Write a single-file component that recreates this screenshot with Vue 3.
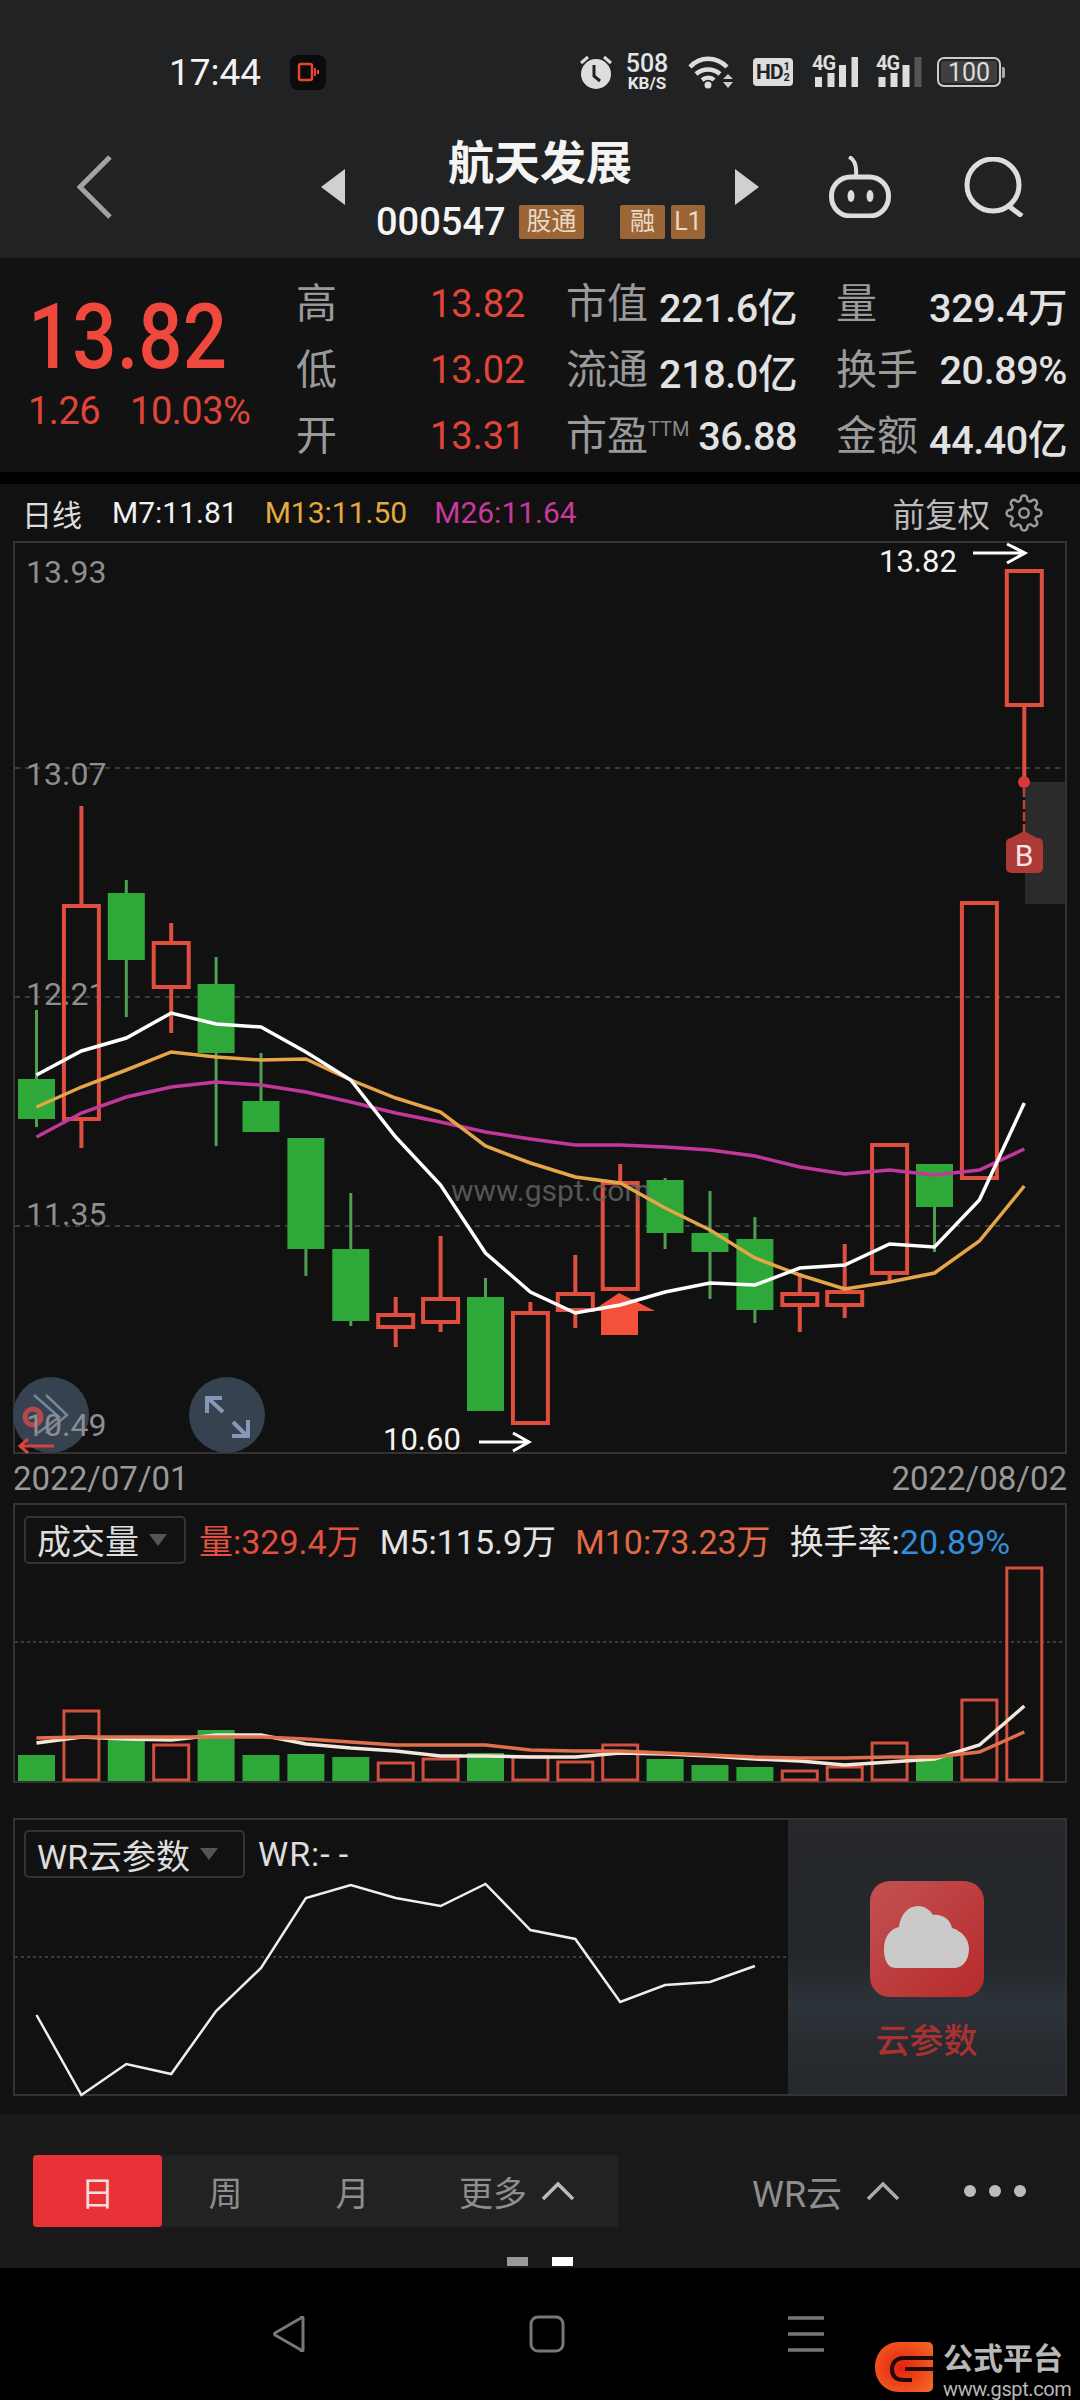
<template>
  <div class="phone">
    <header class="top">
      <div class="status">
        <span class="clock">17:44</span>
        <span class="rec">
          <svg width="22" height="20" viewBox="0 0 22 20"><rect x="2" y="2" width="13" height="16" rx="2" fill="none" stroke="#e8452f" stroke-width="2.5"/><path d="M18 6v8M21 8v4" stroke="#e8452f" stroke-width="2"/></svg>
        </span>
        <div class="status-right">
          <svg width="32" height="34" viewBox="0 0 32 34"><circle cx="16" cy="19" r="15" fill="#ddd"/><path d="M14 10v11l6 5" fill="none" stroke="#222" stroke-width="3"/><path d="M1 8l7-6M31 8l-7-6" stroke="#ddd" stroke-width="3"/></svg>
          <div class="speed"><b>508</b><i>KB/S</i></div>
          <svg class="wifi" width="45" height="34" viewBox="0 0 45 34"><path d="M2 12C12 1 28 1 39 12M8 19c7-6 17-6 24 0M14 25c4-3 9-3 12 0" fill="none" stroke="#ddd" stroke-width="4.500"/><circle cx="20" cy="30" r="3.500" fill="#ddd"/><path d="M35 24l5-5 5 5zM35 27l5 6 5-6z" fill="#ccc"/></svg>
          <div class="hd"><b>HD</b><i>1<br>2</i></div>
          <div class="signal sig-a"><em>4G</em><svg width="46" height="30" viewBox="0 0 46 30"><path d="M6.500 20v10M19 15v15M30.500 8v22M43 0v30" stroke="#ddd" stroke-width="7"/></svg></div>
          <div class="signal sig-b"><em>4G</em><svg width="46" height="30" viewBox="0 0 46 30"><path d="M6 20v10M18 15v15M30 8v22" stroke="#ddd" stroke-width="7"/><path d="M42 0v30" stroke="#555" stroke-width="7"/></svg></div>
          <div class="battery"><span>100</span></div>
        </div>
      </div>
      <nav class="nav">
        <svg class="back" width="36" height="64" viewBox="0 0 36 64"><path d="M33 2L3 32l30 30" fill="none" stroke="#a3a3a3" stroke-width="5"/></svg>
        <svg class="tri-left" width="24" height="36" viewBox="0 0 24 36"><path d="M24 0v36L0 18z" fill="#d0d0d0"/></svg>
        <div class="title">
          <div class="name">航天发展</div>
          <div class="code">
            <span class="num">000547</span>
            <span class="tag tag-a">股通</span>
            <span class="tag tag-b">融</span>
            <span class="tag tag-c">L1</span>
          </div>
        </div>
        <svg width="24" height="36" viewBox="0 0 24 36"><path d="M0 0v36l24-18z" fill="#d0d0d0"/></svg>
        <svg class="robot" width="62" height="62" viewBox="0 0 62 62"><path d="M20 1c5 2 8 7 7 19" fill="none" stroke="#ddd" stroke-width="4"/><rect x="2.500" y="21" width="57" height="39" rx="19" fill="none" stroke="#ddd" stroke-width="5"/><ellipse cx="22" cy="40" rx="3.500" ry="6" fill="#ddd"/><ellipse cx="41" cy="40" rx="3.500" ry="6" fill="#ddd"/></svg>
        <svg class="search" width="60" height="60" viewBox="0 0 60 60"><circle cx="29" cy="28" r="26" fill="none" stroke="#ddd" stroke-width="5"/><path d="M46 50l12 9" stroke="#ddd" stroke-width="5"/></svg>
      </nav>
    </header>

    <section class="quote">
      <div class="price">
        <div class="last">13.82</div>
        <div class="chg"><span>1.26</span><span>10.03%</span></div>
      </div>
      <div class="stats">
        <template v-for="r in statRows" :key="r.l1">
          <span class="lab">{{ r.l1 }}</span>
          <span class="red-val">{{ r.v1 }}</span>
          <span class="pair"><span class="lab">{{ r.l2 }}<sup v-if="r.ttm">TTM</sup></span><span class="val">{{ r.v2 }}</span></span>
          <span class="pair"><span class="lab">{{ r.l3 }}</span><span class="val">{{ r.v3 }}</span></span>
        </template>
      </div>
    </section>

    <main class="charts">
      <div class="legend">
        <span class="lg-name">日线</span>
        <span class="lg-white">M7:11.81</span>
        <span class="lg-orange">M13:11.50</span>
        <span class="lg-pink">M26:11.64</span>
        <span class="lg-right">前复权
          <svg width="38" height="38" viewBox="0 0 24 24"><circle cx="12" cy="12" r="3" fill="none" stroke="#999" stroke-width="1.600"/><path fill="none" stroke="#999" stroke-width="1.600" d="M19.4 15a1.65 1.65 0 0 0 .33 1.82l.06.06a2 2 0 0 1 0 2.83 2 2 0 0 1-2.83 0l-.06-.06a1.65 1.65 0 0 0-1.82-.33 1.65 1.65 0 0 0-1 1.51V21a2 2 0 0 1-2 2 2 2 0 0 1-2-2v-.09A1.65 1.65 0 0 0 9 19.4a1.65 1.65 0 0 0-1.82.33l-.06.06a2 2 0 0 1-2.83 0 2 2 0 0 1 0-2.83l.06-.06a1.65 1.65 0 0 0 .33-1.82 1.65 1.65 0 0 0-1.51-1H3a2 2 0 0 1-2-2 2 2 0 0 1 2-2h.09A1.65 1.65 0 0 0 4.6 9a1.65 1.65 0 0 0-.33-1.82l-.06-.06a2 2 0 0 1 0-2.83 2 2 0 0 1 2.83 0l.06.06a1.65 1.65 0 0 0 1.82.33H9a1.65 1.65 0 0 0 1-1.51V3a2 2 0 0 1 2-2 2 2 0 0 1 2 2v.09a1.65 1.65 0 0 0 1 1.51 1.65 1.65 0 0 0 1.82-.33l.06-.06a2 2 0 0 1 2.83 0 2 2 0 0 1 0 2.83l-.06.06a1.65 1.65 0 0 0-.33 1.82V9a1.65 1.65 0 0 0 1.51 1H21a2 2 0 0 1 2 2 2 2 0 0 1-2 2h-.09a1.65 1.65 0 0 0-1.51 1z"/></svg>
        </span>
      </div>

      <div class="panel main-panel">
        <svg class="canvas" width="1050" height="909" viewBox="15 543 1050 909">
          <path v-for="y in [768, 997, 1226]" :key="y" :d="`M15 ${y}H1065`" class="grid"/>
          <rect x="1025" y="782" width="40" height="122" fill="#2b2b2b"/>
          <circle cx="51" cy="1415" r="38" class="fab"/>
          <circle cx="227" cy="1415" r="38" class="fab"/>
          <circle cx="33" cy="1417" r="8" fill="none" stroke="#b8474c" stroke-width="5"/>
          <path d="M34 1395l25 22-21 16M46 1395l21 20-21 18" fill="none" stroke="#76869a" stroke-width="2.500"/>
          <path d="M209 1399l14 13M233 1422l13 13M207 1413V1398H222M248 1420V1436H232" fill="none" stroke="#8997b6" stroke-width="4"/>
          <text v-for="a in axis" :key="a.t" x="26" :y="a.y" class="axis">{{ a.t }}</text>
          <g v-for="c in candleShapes" :key="c.x">
            <path :d="wickPath(c)" :class="c.up ? 'wick-up' : 'wick-down'"/>
            <rect v-if="c.up" :x="c.x - 17.500" :y="c.bt" width="35" :height="c.bb - c.bt" class="body-up"/>
            <rect v-else :x="c.x - 18.500" :y="c.bt" width="37" :height="c.bb - c.bt" class="body-down"/>
          </g>
          <text x="451" y="1201" class="mark">www.gspt.com</text>
          <path d="M592 1311L619 1293L655 1311H638V1335H601V1311z" fill="#f4503a"/>
          <polyline :points="magentaPts" class="ln" stroke="#c2389a"/>
          <polyline :points="orangePts" class="ln" stroke="#e5a549"/>
          <polyline :points="whitePts" class="ln" stroke="#fff"/>
          <circle cx="1024" cy="782" r="6" fill="#d8393a"/>
          <path d="M1024 788V832" stroke="#b9443f" stroke-width="2.500" stroke-dasharray="9 3"/>
          <path d="M1011 838L1024 831L1037 838a5 5 0 0 1 6 5V868a5 5 0 0 1-5 5H1011a5 5 0 0 1-5-5V843a5 5 0 0 1 5-5z" fill="#ad3a37"/>
          <text x="1024" y="866" class="badge">B</text>
          <text x="879" y="572" class="hi">13.82</text>
          <path d="M973 553H1024M1007 544L1025 553L1007 563" class="arrow"/>
          <text x="383" y="1450" class="hi">10.60</text>
          <path d="M479 1442H528M513 1433L529 1442L513 1451" class="arrow"/>
          <path d="M22 1446H54M28 1439L20 1446L28 1453" fill="none" stroke="#d9423d" stroke-width="3"/>
        </svg>
      </div>

      <div class="dates"><span>2022/07/01</span><span>2022/08/02</span></div>

      <div class="panel vol-panel">
        <svg class="canvas" width="1050" height="276" viewBox="15 1505 1050 276">
          <path d="M15 1642H1065" class="dots"/>
          <g v-for="b in volBars" :key="b.x">
            <rect v-if="b.up" :x="b.x - 17.500" :y="b.top" width="35" :height="1780 - b.top" class="vol-up"/>
            <rect v-else :x="b.x - 18.500" :y="b.top" width="37" :height="1781 - b.top" fill="#2fa83a"/>
          </g>
          <polyline :points="volWhitePts" class="ln" stroke="#f3e6dc"/>
          <polyline :points="volOrangePts" class="ln" stroke="#e0704c"/>
        </svg>
        <div class="ind-head">
          <span class="picker vol-picker">成交量<i class="caret"></i></span>
          <span class="ind-vals">
            <span class="c-red">量:329.4万</span>
            <span>M5:115.9万</span>
            <span class="c-orange">M10:73.23万</span>
            <span>换手率:<span class="c-blue">20.89%</span></span>
          </span>
        </div>
      </div>

      <div class="panel wr-panel">
        <svg class="canvas" width="773" height="274" viewBox="15 1820 773 274">
          <path d="M15 1957H788" class="dots"/>
          <polyline :points="wrPts" class="ln ln-thin" stroke="#eee"/>
        </svg>
        <div class="ind-head">
          <span class="picker wr-picker">WR云参数<i class="caret"></i></span>
          <span class="wr-val">WR:<span class="dash">--</span></span>
        </div>
        <aside class="cloud">
          <div class="cloud-tile">
            <svg width="114" height="116" viewBox="0 0 114 116"><path d="M26 87C16 87 14 76 14 68C14 56 20 48 29 46C30 34 38 25 48 25C55 25 60 29 63 34C72 33 80 38 82 47C92 50 99 58 99 68C99 80 92 87 84 87Z" fill="#cbc9c9"/></svg>
          </div>
          <div class="cloud-text">云参数</div>
        </aside>
      </div>
    </main>

    <section class="toolbar">
      <div class="tool-row">
        <div class="periods">
          <span class="p p-on">日</span>
          <span class="p">周</span>
          <span class="p">月</span>
          <span class="p p-more">更多<svg width="34" height="20" viewBox="0 0 34 20"><path d="M2 18L17 3l15 15" fill="none" stroke="#bbb" stroke-width="3.500"/></svg></span>
        </div>
        <span class="wr-btn">WR云<svg width="34" height="20" viewBox="0 0 34 20"><path d="M2 18L17 3l15 15" fill="none" stroke="#aaa" stroke-width="3.500"/></svg></span>
        <span class="more"><i></i><i></i><i></i></span>
      </div>
      <div class="pager"><i></i><i class="on"></i></div>
    </section>

    <footer class="sysnav">
      <svg width="34" height="36" viewBox="0 0 34 36"><path d="M31 2v32a1 1 0 0 1-2 0L3 19a1.500 1.500 0 0 1 0-2L29 2a1 1 0 0 1 2 0z" fill="none" stroke="#777" stroke-width="3" stroke-linejoin="round"/></svg>
      <svg class="home" width="36" height="38" viewBox="0 0 36 38"><rect x="2" y="2" width="32" height="34" rx="7" fill="none" stroke="#777" stroke-width="3"/></svg>
      <svg class="menu" width="36" height="36" viewBox="0 0 36 36"><path d="M0 2H36M0 18H36M0 34H36" stroke="#777" stroke-width="3.500"/></svg>
      <div class="brand">
        <svg width="60" height="50" viewBox="0 0 60 50"><defs><radialGradient id="gsp" cx=".45" cy=".5" r=".7"><stop offset="0" stop-color="#e8200f"/><stop offset="1" stop-color="#f26a26"/></radialGradient></defs><path d="M24 0H53a5 5 0 0 1 5 5V45a5 5 0 0 1-5 5H24C10 50 0 39 0 25S10 0 24 0z" fill="url(#gsp)"/><path d="M58 16H29C20 16 17 22 17 27C17 34 21 38 29 38H37M30 27H58" fill="none" stroke="#1c0b08" stroke-width="4"/></svg>
        <div class="brand-text"><b>公式平台</b><span>www.gspt.com</span></div>
      </div>
    </footer>
  </div>
</template>

<script setup>
const xAt = (i) => +(36.5 + 44.9 * i).toFixed(1)
const toPts = (ys) => ys.map((y, i) => `${xAt(i)},${y}`).join(' ')

const statRows = [
  { l1: '高', v1: '13.82', l2: '市值', v2: '221.6亿', l3: '量', v3: '329.4万' },
  { l1: '低', v1: '13.02', l2: '流通', v2: '218.0亿', l3: '换手', v3: '20.89%' },
  { l1: '开', v1: '13.31', l2: '市盈', ttm: true, v2: '36.88', l3: '金额', v3: '44.40亿' },
]

const axis = [
  { t: '13.93', y: 583 },
  { t: '13.07', y: 785 },
  { t: '12.21', y: 1005 },
  { t: '11.35', y: 1225 },
  { t: '10.49', y: 1436 },
]

// wick top, body top, body bottom, wick bottom, up
const candles = [
  [1010, 1079, 1119, 1127, 0], [806, 906, 1119, 1148, 1], [880, 893, 960, 1017, 0],
  [923, 943, 987, 1033, 1], [957, 984, 1053, 1146, 0], [1053, 1101, 1132, 1132, 0],
  [1138, 1138, 1249, 1276, 0], [1193, 1249, 1321, 1326, 0], [1297, 1315, 1327, 1347, 1],
  [1236, 1299, 1322, 1332, 1], [1278, 1297, 1411, 1411, 0], [1302, 1313, 1423, 1423, 1],
  [1255, 1294, 1310, 1328, 1], [1164, 1183, 1289, 1289, 1], [1178, 1180, 1233, 1249, 0],
  [1191, 1233, 1252, 1299, 0], [1217, 1239, 1310, 1323, 0], [1273, 1294, 1305, 1332, 1],
  [1244, 1292, 1305, 1318, 1], [1143, 1145, 1273, 1283, 1], [1164, 1164, 1207, 1252, 0],
  [903, 903, 1178, 1178, 1], [571, 571, 705, 782, 1],
]
const candleShapes = candles.map((c, i) => ({ x: xAt(i), top: c[0], bt: c[1], bb: c[2], bot: c[3], up: c[4] }))
// hollow bodies are see-through, so the wick stops at the body
const wickPath = (c) => `M${c.x} ${c.top}V${c.bt}M${c.x} ${c.bb}V${c.bot}`

const whitePts = toPts([1075, 1051, 1038, 1013, 1024, 1027, 1052, 1080, 1137, 1185, 1253, 1292, 1313, 1305, 1292, 1283, 1285, 1268, 1265, 1244, 1247, 1200, 1103])
const orangePts = toPts([1107, 1087, 1070, 1052, 1057, 1060, 1059, 1080, 1098, 1112, 1146, 1163, 1177, 1183, 1208, 1230, 1258, 1275, 1289, 1282, 1273, 1241, 1186])
const magentaPts = toPts([1137, 1113, 1097, 1087, 1082, 1085, 1092, 1102, 1113, 1122, 1132, 1139, 1145, 1145, 1147, 1150, 1156, 1167, 1174, 1170, 1175, 1170, 1149])

const volTops = [1755, 1711, 1740, 1745, 1730, 1755, 1754, 1757, 1763, 1759, 1753, 1757, 1762, 1745, 1759, 1765, 1767, 1771, 1767, 1743, 1755, 1700, 1568]
const volBars = volTops.map((top, i) => ({ x: xAt(i), top, up: candles[i][4] }))

const volY = (v) => Math.round(1500 + v / 2.613)
const volWhitePts = toPts([635, 620, 625, 628, 615, 615, 637, 648, 655, 670, 668, 672, 672, 660, 665, 670, 678, 682, 692, 685, 678, 640, 538].map(volY))
const volOrangePts = toPts([622, 618, 618, 618, 618, 620, 625, 633, 641, 641, 641, 652, 657, 657, 662, 667, 672, 675, 675, 672, 672, 658, 607].map(volY))
const wrPts = toPts([2015, 2095, 2064, 2074, 2011, 1968, 1898, 1885, 1898, 1906, 1884, 1930, 1939, 2002, 1985, 1982, 1966])
</script>

<style>
html, body { background: #000; }
</style>

<style scoped>
.phone { width: 1080px; height: 2400px; overflow: hidden; background: #111; color: #ddd; font-family: Roboto, "Noto Sans CJK SC", sans-serif; display: flex; flex-direction: column; }
.top { height: 258px; flex: none; background: #202224; box-sizing: border-box; padding-top: 40px; }
.status { height: 64px; display: flex; align-items: center; padding: 0 79px 0 169px; }
.clock { font-size: 37px; color: #f2f2f2; }
.rec { width: 36px; height: 35px; margin-left: 29px; background: #0b0b0b; border-radius: 8px; display: flex; align-items: center; justify-content: center; }
.status-right { margin-left: auto; display: flex; align-items: center; }
.speed { width: 44px; margin-left: 13px; display: flex; flex-direction: column; align-items: center; line-height: 1; color: #e4e4e4; }
.speed b { font-size: 25px; line-height: 20px; font-weight: 500; }
.speed i { font-size: 17px; line-height: 15px; font-style: normal; font-weight: 700; margin-top: 2px; }
.wifi { margin-left: 19px; }
.hd { width: 40px; height: 28px; margin-left: 20px; background: #ddd; border-radius: 4px; color: #222; display: flex; align-items: center; justify-content: center; }
.hd b { font-size: 21px; font-weight: 700; letter-spacing: -1px; }
.hd i { font-size: 11px; line-height: 11px; font-style: normal; font-weight: 700; margin-left: 1px; text-align: center; }
.signal { width: 46px; height: 30px; position: relative; }
.sig-a { margin-left: 19px; }
.sig-b { margin-left: 18px; }
.signal em { position: absolute; left: 0; top: -4px; font-size: 20px; line-height: 20px; font-style: normal; font-weight: 700; color: #ddd; letter-spacing: -1px; background: #202224; padding-right: 1px; }
.signal svg { display: block; }
.battery { width: 64px; height: 30px; margin-left: 15px; box-sizing: border-box; border: 2px solid #ccc; border-radius: 7px; display: flex; align-items: center; justify-content: center; font-size: 25px; color: #ddd; position: relative; background: #3f3f3f; background-clip: content-box; padding: 2px; }
.battery::after { content: ""; position: absolute; right: -6px; top: 8px; width: 3px; height: 11px; background: #aaa; border-radius: 0 2px 2px 0; }

.nav { height: 154px; display: flex; align-items: center; padding: 12px 0 0 77px; box-sizing: border-box; }
.tri-left { margin-left: 208px; }
.title { width: 390px; display: flex; flex-direction: column; margin-top: 0; }
.name { font-size: 46px; line-height: 56px; font-weight: 700; text-align: center; color: #f4f4f4; }
.code { display: flex; align-items: center; height: 36px; margin-top: 13px; padding-left: 31px; }
.num { font-size: 38px; font-weight: 500; color: #f4f4f4; width: 143px; flex: none; }
.tag { height: 34px; background: #9c6536; border-radius: 2px; font-size: 25px; line-height: 34px; color: #e8d8c8; text-align: center; flex: none; }
.tag-a { width: 65px; }
.tag-b { width: 45px; margin-left: 36px; }
.tag-c { width: 34px; margin-left: 6px; overflow: hidden; }
.robot { margin-left: 70px; }
.search { margin-left: 73px; }

.quote { height: 214px; flex: none; background: #121212; display: flex; box-sizing: border-box; }
.price { width: 296px; flex: none; padding: 38px 0 0 28px; box-sizing: border-box; }
.last { font-size: 78px; line-height: 84px; font-weight: 500; color: #f0483c; margin-left: 0; transform: scaleY(1.16); transform-origin: 50% 50%; }
.chg { display: flex; gap: 30px; font-size: 38px; line-height: 40px; color: #e0453a; margin-top: 11px; letter-spacing: -.5px; white-space: nowrap; }
.stats { display: grid; grid-template-columns: 134px 97px 270px 270px; grid-auto-rows: 66px; align-items: center; padding-top: 13px; }
.stats .lab { font-size: 41px; color: #9a9a9a; line-height: 1; white-space: nowrap; }
.lab sup { font-size: 20px; vertical-align: 14px; line-height: 0; color: #888; }
.red-val { font-size: 38px; color: #e0453a; }
.pair { display: flex; justify-content: space-between; align-items: center; margin-left: 39px; width: 231px; }
.val { font-size: 39.500px; color: #e2e2e2; font-weight: 500; white-space: nowrap; letter-spacing: -.4px; }

.charts { flex: none; margin-top: 12px; background: #111; padding: 0 13px; box-shadow: 0 -12px 0 #000; }
.legend { height: 57px; display: flex; align-items: center; gap: 27px; padding-left: 9px; font-size: 30px; white-space: nowrap; }
.lg-name { color: #ddd; margin-right: 3px; }
.lg-white { color: #f2f2f2; }
.lg-orange { color: #e5a93f; }
.lg-pink { color: #c73a9b; }
.lg-right { margin-left: auto; display: flex; align-items: center; gap: 15px; color: #bbb; padding-right: 24px; font-size: 32.500px; }
.panel { border: 2px solid #333; position: relative; box-sizing: border-box; }
.canvas { display: block; overflow: visible; }
.main-panel { height: 913px; }
.grid { stroke: #3d3d3d; stroke-width: 2; stroke-dasharray: 5 5; }
.dots { stroke: #3d3d3d; stroke-width: 2; stroke-dasharray: 3 3; }
.axis { font-size: 32px; fill: #8e8e8e; }
.fab { fill: #36424f; }
.wick-up { stroke: #df4f40; stroke-width: 4; }
.wick-down { stroke: #4f9f52; stroke-width: 3; }
.body-up { fill: none; stroke: #df4f40; stroke-width: 4; }
.body-down { fill: #2fa83a; }
.vol-up { fill: none; stroke: #d2503f; stroke-width: 3; }
.mark { font-size: 30px; fill: #666; opacity: .8; }
.ln { fill: none; stroke-width: 3.500; }
.ln-thin { stroke-width: 2.500; }
.badge { font-size: 30px; fill: #f4e4e4; text-anchor: middle; }
.hi { font-size: 31px; fill: #f4f4f4; }
.arrow { fill: none; stroke: #fff; stroke-width: 3; }
.dates { height: 49px; display: flex; align-items: center; justify-content: space-between; font-size: 33px; color: #999; }
.vol-panel { height: 280px; }
.wr-panel { height: 278px; margin-top: 35px; display: flex; }
.ind-head { position: absolute; left: 9px; top: 10px; display: flex; align-items: center; white-space: nowrap; }
.picker { height: 48px; box-sizing: border-box; border: 2px solid #333; border-radius: 5px; background: #111; display: flex; align-items: center; font-size: 34px; padding-left: 11px; color: #ddd; }
.vol-picker { width: 162px; }
.wr-picker { width: 221px; }
.caret { margin-left: 10px; border: 9px solid transparent; border-top: 12px solid #555; border-bottom: 0; }
.ind-vals { display: flex; gap: 19px; margin-left: 13px; font-size: 34px; color: #e4e4e4; }
.c-red { color: #e2503f; }
.c-orange { color: #e06a45; }
.c-blue { color: #2f8fdc; }
.wr-val { margin-left: 13px; font-size: 34px; color: #ddd; letter-spacing: 1px; }
.dash { letter-spacing: 9px; }
.cloud { width: 277px; flex: none; background: linear-gradient(#26282b, #24272b 50%, #2d343a 68%, #282c30 82%, #25282c); display: flex; flex-direction: column; align-items: center; padding-top: 61px; box-sizing: border-box; }
.cloud-tile { width: 114px; height: 116px; border-radius: 20px; background: linear-gradient(135deg, #c25252, #b82a2a); }
.cloud-tile svg { display: block; }
.cloud-text { font-size: 34px; line-height: 40px; margin-top: 24px; color: #a83232; font-weight: 500; }

.toolbar { height: 172px; flex: none; box-sizing: border-box; padding-top: 59px; background: linear-gradient(#111 18px, #191919 18px); }
.tool-row { height: 72px; display: flex; align-items: center; padding-left: 33px; }
.periods { width: 585px; height: 72px; display: flex; background: #222; flex: none; }
.p { width: 127px; display: flex; align-items: center; justify-content: center; font-size: 34px; color: #8e8e8e; flex: none; }
.p-on { width: 129px; background: #e93138; color: #f4dcdc; border-radius: 4px; }
.p-more { width: 202px; gap: 14px; }
.wr-btn { margin-left: 134px; display: flex; align-items: center; gap: 24px; font-size: 36px; color: #8e8e8e; }
.more { margin-left: 64px; display: flex; gap: 13px; }
.more i { width: 12px; height: 12px; border-radius: 50%; background: #bbb; }
.pager { display: flex; justify-content: center; gap: 24px; margin-top: 30px; }
.pager i { width: 21px; height: 9px; background: #999; }
.pager i.on { background: #fff; }

.sysnav { height: 132px; flex: none; background: #000; display: flex; align-items: center; padding-left: 272px; position: relative; }
.home { margin-left: 223px; }
.menu { margin-left: 223px; }
.brand { position: absolute; left: 875px; top: 74px; display: flex; gap: 8px; }
.brand svg { display: block; }
.brand-text { display: flex; flex-direction: column; color: #b8b8b8; line-height: 1; }
.brand-text b { font-size: 30px; line-height: 34px; }
.brand-text span { font-size: 20px; line-height: 22px; margin-top: 2px; letter-spacing: -.4px; }
</style>
